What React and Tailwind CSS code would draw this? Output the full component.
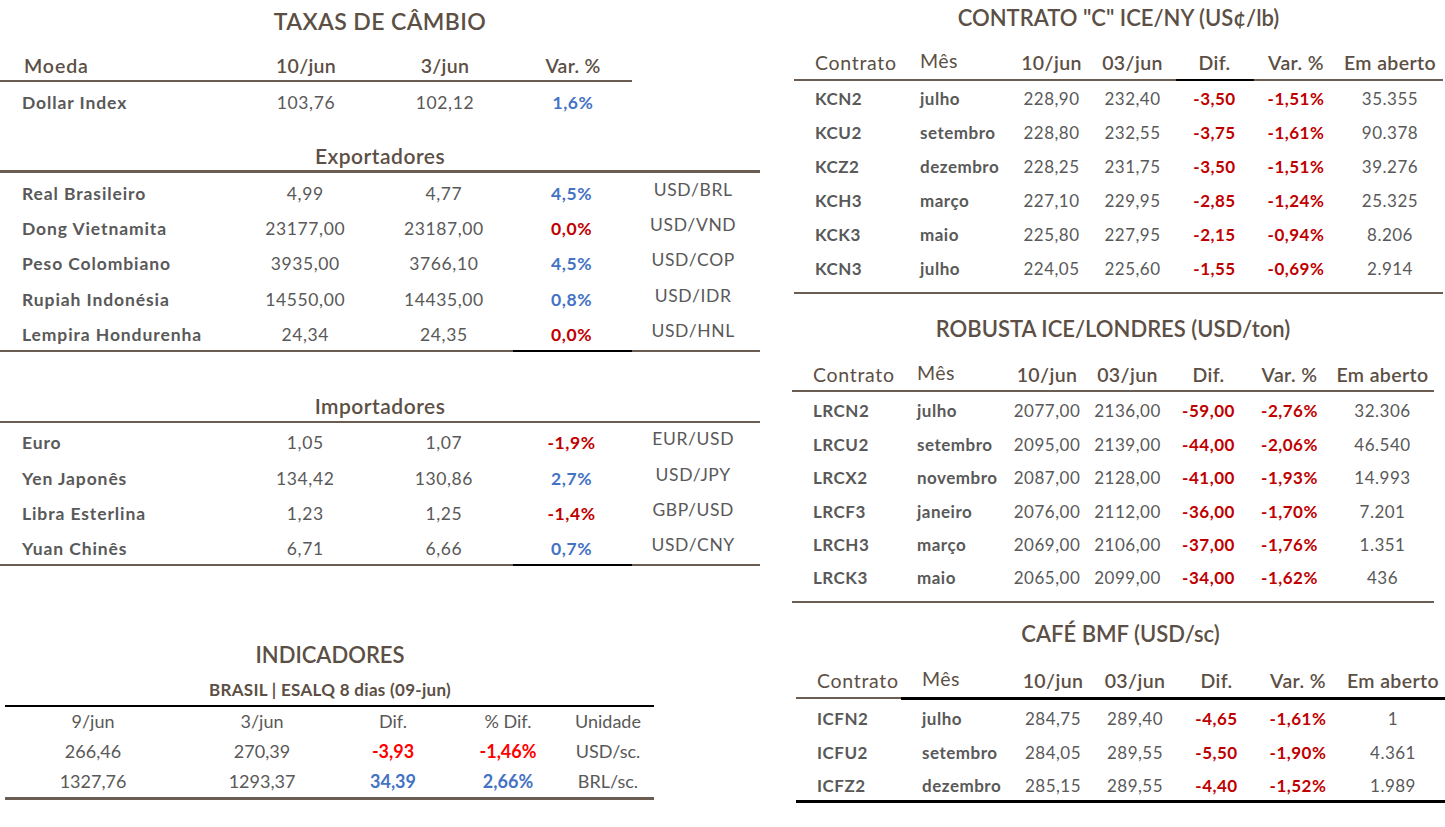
import React from "react";

const BROWN = "text-[#5c4f45]";
const GRAY = "text-[#595959]";
const BLUE = "text-[#4472c4]";
const RED = "text-[#c00000]";

const exportadores = [
  ["Real Brasileiro", "4,99", "4,77", "4,5%", "b", "USD/BRL"],
  ["Dong Vietnamita", "23177,00", "23187,00", "0,0%", "r", "USD/VND"],
  ["Peso Colombiano", "3935,00", "3766,10", "4,5%", "b", "USD/COP"],
  ["Rupiah Indonésia", "14550,00", "14435,00", "0,8%", "b", "USD/IDR"],
  ["Lempira Hondurenha", "24,34", "24,35", "0,0%", "r", "USD/HNL"],
];
const importadores = [
  ["Euro", "1,05", "1,07", "-1,9%", "r", "EUR/USD"],
  ["Yen Japonês", "134,42", "130,86", "2,7%", "b", "USD/JPY"],
  ["Libra Esterlina", "1,23", "1,25", "-1,4%", "r", "GBP/USD"],
  ["Yuan Chinês", "6,71", "6,66", "0,7%", "b", "USD/CNY"],
];

const kc = [
  ["KCN2", "julho", "228,90", "232,40", "-3,50", "-1,51%", "35.355"],
  ["KCU2", "setembro", "228,80", "232,55", "-3,75", "-1,61%", "90.378"],
  ["KCZ2", "dezembro", "228,25", "231,75", "-3,50", "-1,51%", "39.276"],
  ["KCH3", "março", "227,10", "229,95", "-2,85", "-1,24%", "25.325"],
  ["KCK3", "maio", "225,80", "227,95", "-2,15", "-0,94%", "8.206"],
  ["KCN3", "julho", "224,05", "225,60", "-1,55", "-0,69%", "2.914"],
];
const lrc = [
  ["LRCN2", "julho", "2077,00", "2136,00", "-59,00", "-2,76%", "32.306"],
  ["LRCU2", "setembro", "2095,00", "2139,00", "-44,00", "-2,06%", "46.540"],
  ["LRCX2", "novembro", "2087,00", "2128,00", "-41,00", "-1,93%", "14.993"],
  ["LRCF3", "janeiro", "2076,00", "2112,00", "-36,00", "-1,70%", "7.201"],
  ["LRCH3", "março", "2069,00", "2106,00", "-37,00", "-1,76%", "1.351"],
  ["LRCK3", "maio", "2065,00", "2099,00", "-34,00", "-1,62%", "436"],
];
const icf = [
  ["ICFN2", "julho", "284,75", "289,40", "-4,65", "-1,61%", "1"],
  ["ICFU2", "setembro", "284,05", "289,55", "-5,50", "-1,90%", "4.361"],
  ["ICFZ2", "dezembro", "285,15", "289,55", "-4,40", "-1,52%", "1.989"],
];

function LeftRow({ r, h }) {
  return (
    <div className={`flex items-center ${h} pt-[6px] text-[17.5px] tracking-[0.6px] ${GRAY}`}>
      <div className="w-[240px] pl-[22px] font-bold tracking-[0.9px]">{r[0]}</div>
      <div className="w-[132px] text-center">{r[1]}</div>
      <div className="w-[146px] text-center">{r[2]}</div>
      <div className={`w-[110px] text-center font-bold ${r[4] === "b" ? BLUE : RED}`}>{r[3]}</div>
      <div className="w-[134px] text-center mb-[8px]">{r[5]}</div>
    </div>
  );
}

function SplitLine({ h, black = [513, 632], total = 760 }) {
  return (
    <div className="flex w-full">
      <div className={`${h} bg-[#6b5d52]`} style={{ width: black[0] }} />
      <div className={`${h} bg-black`} style={{ width: black[1] - black[0] }} />
      <div className={`${h} bg-[#6b5d52]`} style={{ width: total - black[1] }} />
    </div>
  );
}

function RightTable({ widths, rows, rowH, pt = "" }) {
  return rows.map((r, i) => (
    <div key={i} className={`flex items-center ${pt} text-[17px] tracking-[0.5px] ${GRAY}`} style={{ height: rowH[i] }}>
      <div className="pl-[21px] font-bold" style={{ width: widths[0] }}>{r[0]}</div>
      <div className="pl-[5px] font-bold" style={{ width: widths[1] }}>{r[1]}</div>
      <div className="text-center" style={{ width: widths[2] }}>{r[2]}</div>
      <div className="text-center" style={{ width: widths[3] }}>{r[3]}</div>
      <div className={`text-center font-bold ${RED}`} style={{ width: widths[4] }}>{r[4]}</div>
      <div className={`text-center font-bold ${RED}`} style={{ width: widths[5] }}>{r[5]}</div>
      <div className="text-center" style={{ width: widths[6] }}>{r[6]}</div>
    </div>
  ));
}

function RightHeader({ widths }) {
  return (
    <div className={`flex items-center h-[24px] text-[19.5px] leading-[24px] tracking-[0.4px] ${BROWN}`}>
      <div className="pl-[21px] tracking-[0.7px]" style={{ width: widths[0] }}>Contrato</div>
      <div className="pl-[5px] -mt-[4px]" style={{ width: widths[1] }}>Mês</div>
      <div className="text-center font-semibold" style={{ width: widths[2] }}>10/jun</div>
      <div className="text-center font-semibold" style={{ width: widths[3] }}>03/jun</div>
      <div className="text-center font-semibold" style={{ width: widths[4] }}>Dif.</div>
      <div className="text-center font-semibold" style={{ width: widths[5] }}>Var. %</div>
      <div className="text-center font-semibold whitespace-nowrap" style={{ width: widths[6] }}>Em aberto</div>
    </div>
  );
}

export default function App() {
  const kcW = [121, 97, 79, 83, 81, 82, 106];
  const lrW = [120, 96, 78, 83, 79, 83, 103];
  const icW = [121, 97, 78, 86, 77, 86, 104];
  return (
    <div className="flex w-[1445px] h-[827px] bg-white font-['Lato',sans-serif] overflow-hidden">
      {/* LEFT */}
      <div className="w-[760px] flex flex-col">
        <div className={`h-[42px] flex items-center justify-center text-[23px] tracking-[0.4px] font-semibold ${BROWN}`}>
          TAXAS DE CÂMBIO
        </div>
        <div className={`w-[632px] h-[40px] pt-[12px] flex text-[19.5px] leading-[24px] tracking-[0.3px] font-semibold ${BROWN} border-b-2 border-[#6b5d52]`}>
          <div className="w-[240px] pl-[24px] tracking-[0.9px]">Moeda</div>
          <div className="w-[132px] text-center">10/jun</div>
          <div className="w-[146px] text-center">3/jun</div>
          <div className="w-[110px] text-center">Var. %</div>
        </div>
        <div className={`flex items-center h-[40px] pt-[2px] text-[17.5px] tracking-[0.6px] ${GRAY}`}>
          <div className="w-[240px] pl-[22px] font-bold tracking-[0.9px]">Dollar Index</div>
          <div className="w-[132px] text-center">103,76</div>
          <div className="w-[146px] text-center">102,12</div>
          <div className={`w-[110px] text-center font-bold ${BLUE}`}>1,6%</div>
        </div>
        <div className={`h-[48px] pt-[22px] text-center text-[21px] leading-[24px] tracking-[0.5px] font-semibold ${BROWN}`}>
          Exportadores
        </div>
        <div className="h-[3px] bg-[#6b5d52]" />
        {exportadores.map((r, i) => (
          <LeftRow key={i} r={r} h="h-[35.4px]" />
        ))}
        <SplitLine h="h-[2px]" />
        <div className={`h-[69px] pt-[42px] text-center text-[21px] leading-[24px] tracking-[0.5px] font-semibold ${BROWN}`}>
          Importadores
        </div>
        <div className="h-[2px] bg-[#6b5d52]" />
        {importadores.map((r, i) => (
          <LeftRow key={i} r={r} h="h-[35.2px]" />
        ))}
        <SplitLine h="h-[2px]" />

        {/* INDICADORES */}
        <div className="w-[660px]">
          <div className={`pt-[77px] text-center text-[22px] leading-[24px] font-semibold ${BROWN}`}>
            INDICADORES
          </div>
          <div className={`pt-[11px] h-[38px] text-center text-[17px] leading-[24px] tracking-[0.3px] font-bold ${BROWN}`}>
            BRASIL | ESALQ 8 dias (09-jun)
          </div>
          <div className="ml-[5px] w-[649px] h-[2px] bg-black" />
          <div className={`ml-[5px] w-[649px] flex items-center h-[30px] text-[18px] ${GRAY}`}>
            <div className="w-[176px] text-center">9/jun</div>
            <div className="w-[162px] text-center">3/jun</div>
            <div className="w-[100px] text-center">Dif.</div>
            <div className="w-[130px] text-center">% Dif.</div>
            <div className="w-[70px] text-center">Unidade</div>
          </div>
          <div className={`ml-[5px] w-[649px] flex items-center h-[30px] text-[18px] ${GRAY}`}>
            <div className="w-[176px] text-center">266,46</div>
            <div className="w-[162px] text-center">270,39</div>
            <div className="w-[100px] text-center font-bold text-[#ff0000]">-3,93</div>
            <div className="w-[130px] text-center font-bold text-[#ff0000]">-1,46%</div>
            <div className="w-[70px] text-center">USD/sc.</div>
          </div>
          <div className={`ml-[5px] w-[649px] flex items-center h-[30px] text-[18px] ${GRAY}`}>
            <div className="w-[176px] text-center">1327,76</div>
            <div className="w-[162px] text-center">1293,37</div>
            <div className={`w-[100px] text-center font-bold ${BLUE}`}>34,39</div>
            <div className={`w-[130px] text-center font-bold ${BLUE}`}>2,66%</div>
            <div className="w-[70px] text-center">BRL/sc.</div>
          </div>
          <div className="ml-[5px] w-[649px] h-[3px] bg-[#6b5d52]" />
        </div>
      </div>

      {/* RIGHT */}
      <div className="flex-1 flex flex-col">
        {/* CONTRATO C */}
        <div className="ml-[34px] w-[649px]">
          <div className={`h-[34px] flex items-center justify-center text-[22px] font-semibold ${BROWN}`}>
            CONTRATO "C" ICE/NY (US¢/lb)
          </div>
          <div className="pt-[17px] h-[45px]">
            <RightHeader widths={kcW} />
          </div>
          <SplitLine h="h-[2px]" black={[382, 460]} total={649} />
          <RightTable widths={kcW} rows={kc} rowH={[34, 34, 34, 34, 34, 34]} pt="pt-[1px]" />
          <div className="h-[7px]" />
          <div className="h-[2px] bg-[#6b5d52]" />
        </div>

        {/* ROBUSTA */}
        <div className="ml-[32px] w-[642px]">
          <div className={`pt-[23px] h-[59px] text-center text-[22px] leading-[24px] font-semibold ${BROWN}`}>
            ROBUSTA ICE/LONDRES (USD/ton)
          </div>
          <div className="pt-[10px] h-[37px]">
            <RightHeader widths={lrW} />
          </div>
          <div className="h-[2px] bg-[#6b5d52]" />
          <div className="h-[1px]" />
          <RightTable widths={lrW} rows={lrc} rowH={[33.4, 33.4, 33.4, 33.4, 33.4, 33.4]} pt="pt-[3px]" />
          <div className="h-[8px]" />
          <div className="h-[2px] bg-[#6b5d52]" />
        </div>

        {/* CAFE BMF */}
        <div className="ml-[36px] w-[649px]">
          <div className={`pt-[19px] h-[43px] text-center text-[22px] leading-[24px] font-semibold ${BROWN}`}>
            CAFÉ BMF (USD/sc)
          </div>
          <div className="pt-[23px] h-[51px]">
            <RightHeader widths={icW} />
          </div>
          <div className="flex">
            <div className="w-[105px] h-[2px] bg-[#6b5d52]" />
            <div className="flex-1 h-[3px] bg-black" />
          </div>
          <RightTable widths={icW} rows={icf} rowH={[34, 34, 32]} pt="pt-[2px]" />
          <div className="h-[3px] bg-black" />
        </div>
      </div>
    </div>
  );
}
